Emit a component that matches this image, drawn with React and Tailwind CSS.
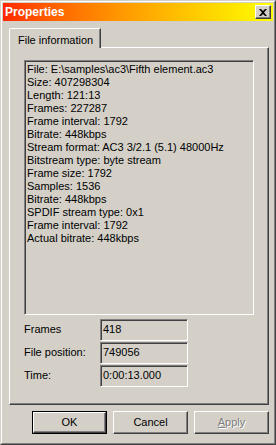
const lines = [
  "File: E:\\samples\\ac3\\Fifth element.ac3",
  "Size: 407298304",
  "Length: 121:13",
  "Frames: 227287",
  "Frame interval: 1792",
  "Bitrate: 448kbps",
  "Stream format: AC3 3/2.1 (5.1) 48000Hz",
  "Bitstream type: byte stream",
  "Frame size: 1792",
  "Samples: 1536",
  "Bitrate: 448kbps",
  "SPDIF stream type: 0x1",
  "Frame interval: 1792",
  "Actual bitrate: 448kbps",
];

const fields = [
  { label: "Frames", value: "418" },
  { label: "File position:", value: "749056" },
  { label: "Time:", value: "0:00:13.000" },
];

const raised =
  "border border-t-white border-l-white border-r-[#404040] border-b-[#404040] shadow-[inset_-1px_-1px_0_#808080]";
const sunken =
  "border border-t-[#808080] border-l-[#808080] border-r-white border-b-white shadow-[inset_1px_1px_0_#404040]";

function Button({ children, primary, disabled }) {
  return (
    <div
      className={
        primary
          ? "w-[75px] h-[23px] border border-black"
          : "w-[75px] h-[23px]"
      }
    >
      <div className={"w-full h-full flex items-center justify-center " + raised}>
        <span
          className={
            disabled
              ? "text-[#808080] [text-shadow:1px_1px_0_#fff]"
              : "text-black"
          }
        >
          {children}
        </span>
      </div>
    </div>
  );
}

export default function App() {
  return (
    <div
      className="w-[276px] h-[445px] bg-[#d4d0c8] border border-t-[#d4d0c8] border-l-[#d4d0c8] border-r-[#404040] border-b-[#404040] text-[11px] text-black"
      style={{ fontFamily: '"Liberation Sans", Arial, sans-serif' }}
    >
      <div className="h-full border border-t-white border-l-white border-r-[#808080] border-b-[#808080] p-px flex flex-col">
        {/* title bar */}
        <div className="h-[18px] shrink-0 bg-linear-to-r from-[#ff2400] to-[#ffff00] flex items-center justify-between pl-[2px] pr-[2px]">
          <span className="text-white font-bold text-[12px] leading-none">Properties</span>
          <div className={"w-[16px] h-[14px] bg-[#d4d0c8] flex items-center justify-center " + raised}>
            <svg width="8" height="7" viewBox="0 0 8 7" className="mr-px">
              <path d="M0 0h2l2 2 2-2h2L5 3.5 8 7H6L4 5 2 7H0l3-3.5z" fill="#000" />
            </svg>
          </div>
        </div>

        {/* tabs */}
        <div className="mt-[7px] ml-[6px] mr-[4px] flex flex-col">
          <div className="flex">
            <div className="relative z-10 -mb-px h-[20px] pl-[8px] pr-[7px] pt-[3px] bg-[#d4d0c8] border-t border-l border-r border-t-white border-l-white border-r-[#404040] rounded-tl-[2px] shadow-[inset_-1px_0_0_#808080]">
              File information
            </div>
          </div>
          <div className={"h-[358px] flex flex-col pl-[14px] pr-[14px] pt-[12px] " + raised}>
            <div className={"h-[255px] bg-[#d4d0c8] pl-[2px] pt-[2px] " + sunken}>
              {lines.map((l, i) => (
                <div key={i} className="leading-[13px] whitespace-nowrap">
                  {l}
                </div>
              ))}
            </div>
            <div className="mt-[3px] flex flex-col">
              {fields.map((f) => (
                <div key={f.label} className="h-[23px] flex items-center">
                  <span className="w-[76px]">{f.label}</span>
                  <div className={"w-[88px] h-[22px] flex items-center pl-[2px] " + sunken}>
                    {f.value}
                  </div>
                </div>
              ))}
            </div>
          </div>
        </div>

        {/* buttons */}
        <div className="mt-[6px] mr-[4px] flex justify-end gap-[6px]">
          <Button primary>OK</Button>
          <Button>Cancel</Button>
          <Button disabled>
            <span className="underline">A</span>pply
          </Button>
        </div>
      </div>
    </div>
  );
}
